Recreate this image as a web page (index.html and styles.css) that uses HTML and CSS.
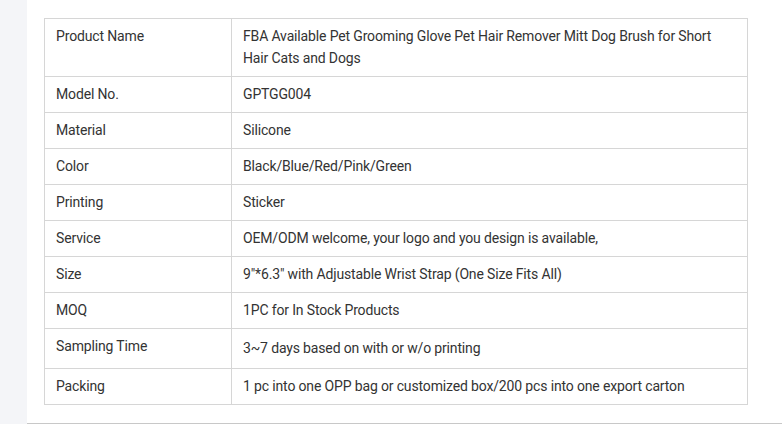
FILE: index.html
```html
<!DOCTYPE html>
<html lang="en">
<head>
<meta charset="utf-8">
<title>Product specification</title>
<link rel="stylesheet" href="styles.css">
</head>
<body>
<div class="page">
  <main class="panel">
    <table class="spec">
      <tbody>
        <tr><td class="k">Product Name</td><td class="v">FBA Available Pet Grooming Glove Pet Hair Remover Mitt Dog Brush for Short Hair Cats and Dogs</td></tr>
        <tr><td class="k">Model No.</td><td class="v">GPTGG004</td></tr>
        <tr><td class="k">Material</td><td class="v">Silicone</td></tr>
        <tr><td class="k">Color</td><td class="v">Black/Blue/Red/Pink/Green</td></tr>
        <tr><td class="k">Printing</td><td class="v">Sticker</td></tr>
        <tr><td class="k">Service</td><td class="v">OEM/ODM welcome, your logo and you design is available,</td></tr>
        <tr><td class="k">Size</td><td class="v">9"*6.3" with Adjustable Wrist Strap (One Size Fits All)</td></tr>
        <tr><td class="k">MOQ</td><td class="v">1PC for In Stock Products</td></tr>
        <tr><td class="k">Sampling Time</td><td class="v tall">3~7 days based on with or w/o printing</td></tr>
        <tr><td class="k">Packing</td><td class="v">1 pc into one OPP bag or customized box/200 pcs into one export carton</td></tr>
      </tbody>
    </table>
  </main>
</div>
</body>
</html>
```
FILE: styles.css
```css
html, body {
  margin: 0;
  padding: 0;
  background: #ffffff;
}
.page {
  display: flex;
  background: #f4f5f8;
  min-height: 424px;
}
.panel {
  margin-left: 27px;
  flex: 1;
  background: #ffffff;
  padding: 18px 0 18px 17px;
  border-bottom: 1px solid #c8c8c8;
}
.spec {
  border-collapse: collapse;
  width: 704px;
  font-family: Roboto, "Liberation Sans", sans-serif;
  font-size: 14px;
  line-height: 22px;
  letter-spacing: -0.15px;
  color: #333333;
}
.spec td {
  border: 1px solid #d6d6d6;
  padding: 6px 12px 7px 11px;
  vertical-align: top;
  text-align: left;
}
.spec td.k {
  width: 163px;
}
.spec td.tall {
  line-height: 26px;
}
```
